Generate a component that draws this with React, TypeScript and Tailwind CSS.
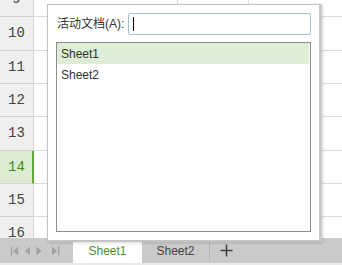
const rows = [
  { n: 9, h: 'h-[34px] -mt-[17px]' },
  { n: 10, h: 'h-[34px]' },
  { n: 11, h: 'h-[33px]' },
  { n: 12, h: 'h-[33px]' },
  { n: 13, h: 'h-[34px]' },
  { n: 14, h: 'h-[33px]' },
  { n: 15, h: 'h-[33px]' },
  { n: 16, h: 'h-[33px]' },
]

function SheetRow({ n, h }: { n: number; h: string }) {
  const active = n === 14

  return (
    <div className={`flex ${h} shrink-0`}>
      <div
        className={
          active
            ? 'flex w-[34px] items-center justify-center border-b border-r-2 border-b-[#d4d4d4] border-r-[#5ea93b] bg-[#dbecd3] pl-[1px] text-[#3d8c1d]'
            : 'flex w-[34px] items-center justify-center border-b border-r border-[#d4d4d4] bg-[#efefef] text-[#444]'
        }
      >
        <span className="font-['Liberation_Mono',monospace] text-[14px]">
          {n}
        </span>
      </div>
      <div className="flex flex-1 border-b border-[#dcdcdc]">
        <div className="w-[144px] border-r border-[#dcdcdc]" />
        <div className="w-[71px] border-r border-[#dcdcdc]" />
        <div className="flex-1" />
      </div>
    </div>
  )
}

function NavArrows() {
  return (
    <div className="flex w-[73px] items-center pl-[9px] text-[#a3a3a3]">
      <svg width="70" height="14" viewBox="0 0 70 14" fill="currentColor">
        <rect x="2" y="2" width="1.5" height="10" />
        <path d="M10 2 L4.5 7 L10 12 Z" />
        <path d="M23 2 L17.5 7 L23 12 Z" />
        <path d="M30 2 L35.5 7 L30 12 Z" />
        <path d="M47 2 L52.5 7 L47 12 Z" />
        <rect x="53.5" y="2" width="1.5" height="10" />
      </svg>
    </div>
  )
}

export default function App() {
  return (
    <div className="relative h-[265px] w-[342px] overflow-hidden bg-white font-['Liberation_Sans','Noto_Sans_CJK_SC',sans-serif]">
      <div className="flex h-[238px] flex-col overflow-hidden">
        {rows.map((row) => (
          <SheetRow key={row.n} n={row.n} h={row.h} />
        ))}
      </div>

      <div className="flex h-[25px] bg-[#cacaca] text-[12px]">
        <NavArrows />
        <div className="flex w-[69px] items-center justify-center bg-white pt-[1px] text-[#4f8f2c]">
          Sheet1
        </div>
        <div className="flex w-[67px] items-center justify-center pt-[1px] text-[#444]">
          Sheet2
        </div>
        <div className="my-[2px] w-px bg-[#b5b5b5]" />
        <div className="flex w-[32px] items-center justify-center">
          <svg width="13" height="13" viewBox="0 0 13 13">
            <path
              d="M6.5 0.5 V12.5 M0.5 6.5 H12.5"
              stroke="#444"
              strokeWidth="1.6"
            />
          </svg>
        </div>
      </div>
      <div className="h-[2px] bg-[#e9e9e9]" />

      <div className="absolute left-[47px] top-[4px] flex h-[238px] w-[275px] flex-col border border-r-[3px] border-b-[2px] border-[#c4c4c4] border-r-[#c9c9c9] bg-white px-[8px] pb-[8px] pt-[8px] shadow-[1px_1px_3px_rgba(0,0,0,0.15)]">
        <div className="flex h-[22px] items-center">
          <span className="pl-[1px] text-[12px] text-[#333]">
            活动文档(A):
          </span>
          <div className="ml-auto flex h-[22px] w-[183px] items-center rounded-[2px] border border-[#a9c0d0] pl-[4px]">
            <div className="h-[14px] w-px bg-black" />
          </div>
        </div>

        <div className="mt-[7px] flex-1 border border-[#8c8c8c] pr-[1px]">
          <div className="flex h-[21px] items-center bg-[#deedd6] pl-[4px] text-[12px] text-[#333]">
            Sheet1
          </div>
          <div className="flex h-[21px] items-center pl-[4px] text-[12px] text-[#333]">
            Sheet2
          </div>
        </div>
      </div>
    </div>
  )
}
